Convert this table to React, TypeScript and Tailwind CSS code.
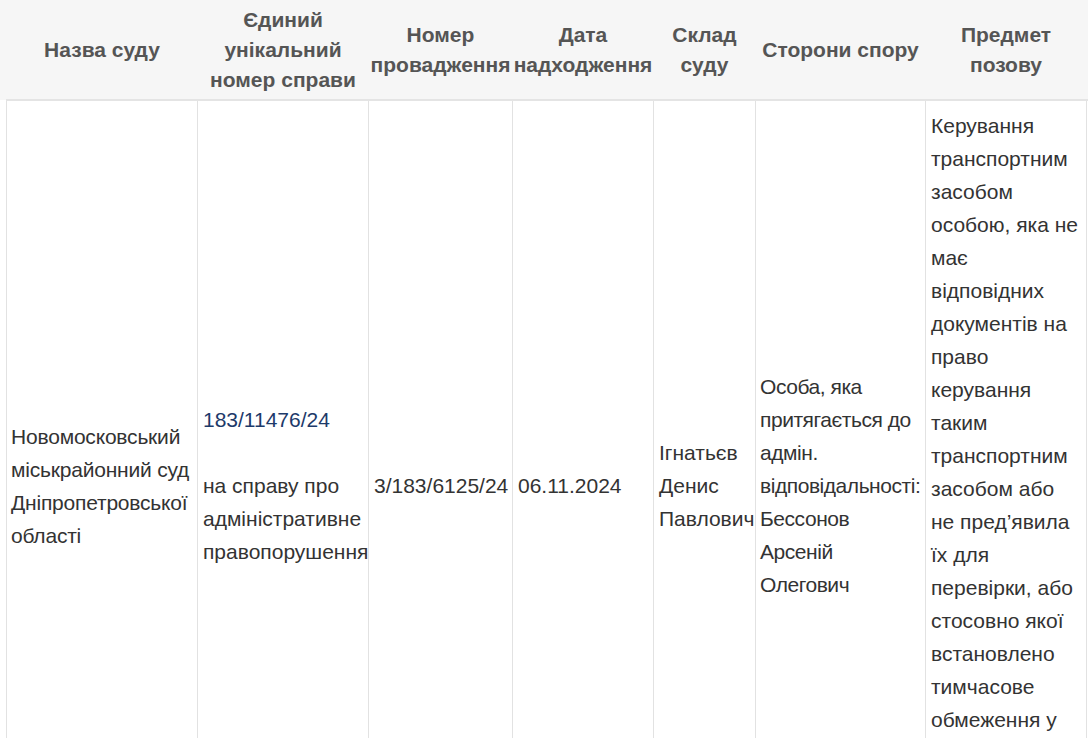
import React from 'react';

type Row = {
  court: string;
  caseNo: string;
  caseNote: string;
  procNo: string;
  date: string;
  judge: string;
  parties: string;
  subject: string;
};

const headers = [
  'Назва суду',
  'Єдиний унікальний номер справи',
  'Номер провадження',
  'Дата надходження',
  'Склад суду',
  'Сторони спору',
  'Предмет позову',
  '',
];

const colWidths = ['w-[191px]', 'w-[171px]', 'w-[144px]', 'w-[141px]', 'w-[102px]', 'w-[170px]', 'w-[161px]', 'w-[160px]'];

const rows: Row[] = [
  {
    court: 'Новомосковський міськрайонний суд Дніпропетровської області',
    caseNo: '183/11476/24',
    caseNote: 'на справу про адміністративне правопорушення',
    procNo: '3/183/6125/24',
    date: '06.11.2024',
    judge: 'Ігнатьєв Денис Павлович',
    parties: 'Особа, яка притягається до адмін. відповідальності: Бессонов Арсеній Олегович',
    subject:
      'Керування транспортним засобом особою, яка не має відповідних документів на право керування таким транспортним засобом або не пред’явила їх для перевірки, або стосовно якої встановлено тимчасове обмеження у праві керування транспортним засобом',
  },
];

const App: React.FC = () => {
  return (
    <div className="relative w-[1088px] h-[738px] overflow-hidden bg-white font-['Liberation_Sans',Arial,sans-serif]">
      <div className="pl-[6px] bg-[linear-gradient(to_bottom,#f6f6f6_0,#f6f6f6_100px,white_100px)]">
        <table className="table-fixed border-collapse w-[1240px] text-[21px]">
          <colgroup>
            {colWidths.map((w, i) => (
              <col key={i} className={w} />
            ))}
          </colgroup>
          <thead>
            <tr className="bg-[#f6f6f6] border-b-2 border-[#e4e4e4]">
              {headers.map((h, i) => (
                <th
                  key={i}
                  className="h-[100px] px-0 align-middle text-center font-bold text-[#555555] leading-[30px]"
                >
                  {h}
                </th>
              ))}
            </tr>
          </thead>
          <tbody>
            {rows.map((r, i) => (
              <tr key={i} className="text-[#333333] leading-[33px]">
                <td className="border border-[#e2e2e2] px-[4px] align-middle tracking-[-0.2px]">{r.court}</td>
                <td className="border border-[#e2e2e2] px-[5px] align-middle">
                  <a className="text-[#1d3a6a]">{r.caseNo}</a>
                  <br />
                  <br />
                  {r.caseNote}
                </td>
                <td className="border border-[#e2e2e2] px-[5px] align-middle">{r.procNo}</td>
                <td className="border border-[#e2e2e2] px-[5px] align-middle">{r.date}</td>
                <td className="border border-[#e2e2e2] px-[5px] align-middle">{r.judge}</td>
                <td className="border border-[#e2e2e2] px-[4px] align-middle tracking-[-0.45px]">{r.parties}</td>
                <td className="border border-[#e2e2e2] px-[5px] pt-[8px] pb-[2px] align-top">{r.subject}</td>
                <td className="border border-[#e2e2e2] px-[5px] align-middle"></td>
              </tr>
            ))}
          </tbody>
        </table>
      </div>
    </div>
  );
};

export default App;
